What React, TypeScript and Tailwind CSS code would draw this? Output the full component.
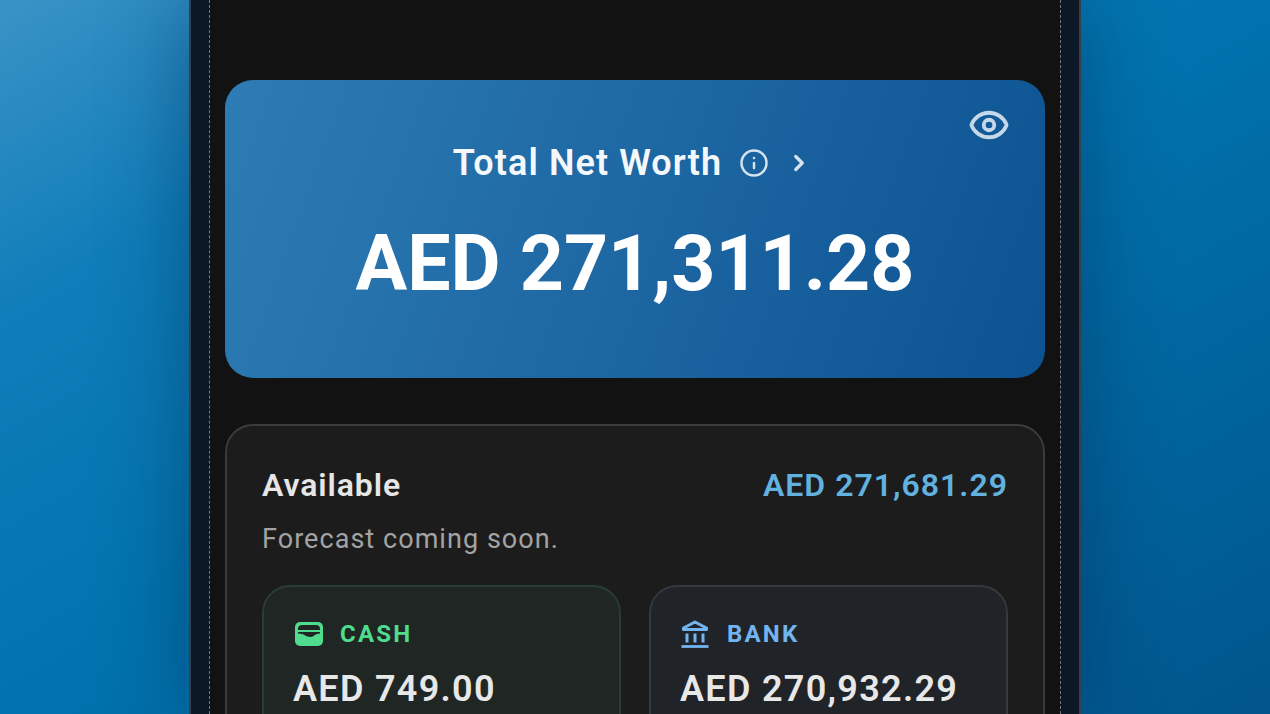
import { Eye, Info, ChevronRight } from 'lucide-react';

function WalletIcon() {
  return (
    <svg width="28" height="24" viewBox="0 0 28 24" className="ml-[2px] shrink-0">
      <rect x="0" y="0" width="28" height="24" rx="5" fill="#4fdc8f" />
      <path d="M3 7 C3 4.500 4.500 3 7 3 H21 C23.500 3 25 4.500 25 7 V8 H3 Z" fill="#202624" />
      <path d="M3 10 H25 V11.500 C20 11.500 19 15 15.500 15 C11 15 9 11.500 3 11.500 Z" fill="#202624" />
    </svg>
  );
}

function BankIcon() {
  return (
    <svg width="28" height="28" viewBox="0 0 28 28" fill="none" stroke="#72b4f0" className="mr-[1px] ml-[1px] shrink-0">
      <path d="M14 2 L25.500 8 V9.500 H2.500 V8 Z" strokeWidth="3" strokeLinejoin="round" />
      <path d="M6 13.500 V22.500 M14 13.500 V22.500 M22 13.500 V22.500" strokeWidth="3" />
      <path d="M0.500 26.500 H27.500" strokeWidth="2.8" />
    </svg>
  );
}

function AccountCard({ label, amount, icon, labelClass, cardClass }: { label: string; amount: string; icon: React.ReactNode; labelClass: string; cardClass: string }) {
  return (
    <div className={`h-[200px] flex-1 rounded-[28px] border-2 px-[29px] pt-[31px] ${cardClass}`}>
      <div className="flex h-[32px] items-center gap-[17px]">
        {icon}
        <span className={`text-[24px] font-bold tracking-[2.2px] ${labelClass}`}>{label}</span>
      </div>
      <div className="mt-[17px] text-[36px] leading-[44px] font-semibold tracking-[1.3px] text-[#e8e8e8]">{amount}</div>
    </div>
  );
}

export default function App() {
  return (
    <div className="relative flex h-[714px] w-[1270px] justify-center overflow-hidden bg-[linear-gradient(150deg,#3a93c6_0%,#0f7db9_22%,#0073ae_50%,#00558c_100%)] font-['Roboto',sans-serif]">
      {/* Phone frame */}
      <div className="h-full w-[892px] shrink-0 border-x-2 border-[#33404e] bg-[#0c1826] px-[18px] shadow-[0_0_80px_rgba(0,25,60,0.4)]">
        <div className="h-full border-x border-dashed border-[#77787a] bg-[#121212] px-[15px] pt-[80px]">
          {/* Net worth card */}
          <div className="relative flex h-[298px] flex-col items-center rounded-[28px] bg-[linear-gradient(110deg,#2d7cb5_0%,#0d5291_100%)] pt-[60px]">
            <Eye size={42} strokeWidth={2.2} className="absolute top-[24px] right-[35px] text-[#c4d8e9]" />
            <div className="flex h-[46px] items-center pr-[5px]">
              <span className="text-[36px] font-semibold tracking-[1.1px] text-[#f5f8fb]">Total Net Worth</span>
              <Info size={30} strokeWidth={2} className="ml-[17px] text-[#d5e3ef]" />
              <ChevronRight size={26} strokeWidth={3} className="ml-[17px] text-[#d5e3ef]" />
            </div>
            <div className="mt-[34px] text-[77px] leading-[88px] font-bold text-white">AED 271,311.28</div>
          </div>

          {/* Available panel */}
          <div className="mt-[46px] h-[400px] rounded-[28px] border-2 border-[#3a3b3d] bg-[#1c1c1c] px-[35px] pt-[40px]">
            <div className="flex items-center justify-between">
              <span className="text-[32px] leading-[38px] font-semibold tracking-[0.9px] text-[#e6e6e6]">Available</span>
              <span className="text-[32px] leading-[38px] font-semibold tracking-[1px] text-[#62b2e0]">AED 271,681.29</span>
            </div>
            <p className="mt-[17px] text-[27px] leading-[36px] tracking-[1.05px] text-[#a3a3a3]">Forecast coming soon.</p>
            <div className="mt-[28px] flex gap-[28px]">
              <AccountCard label="CASH" amount="AED 749.00" icon={<WalletIcon />} labelClass="text-[#4fdc8f]" cardClass="border-[#2a3d33] bg-[#202624]" />
              <AccountCard label="BANK" amount="AED 270,932.29" icon={<BankIcon />} labelClass="text-[#72b4f0]" cardClass="border-[#33393f] bg-[#202428]" />
            </div>
          </div>
        </div>
      </div>
    </div>
  );
}
